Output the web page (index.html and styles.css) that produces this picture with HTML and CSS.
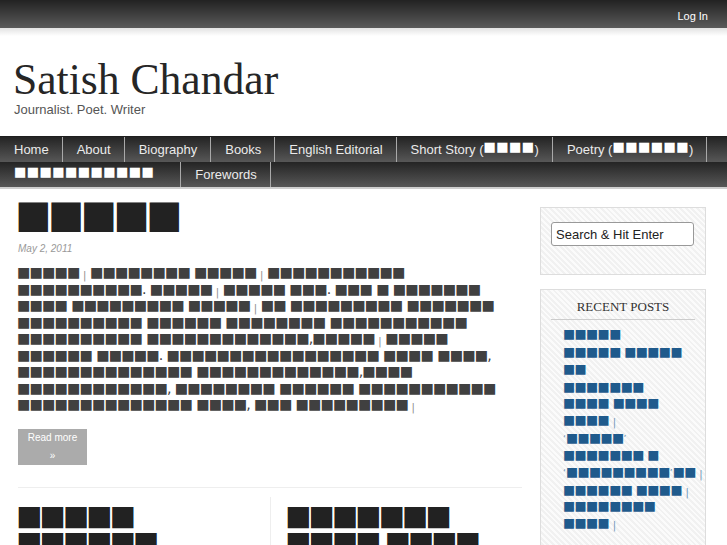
FILE: index.html
```html
<!DOCTYPE html>
<html lang="te">
<head>
<meta charset="utf-8">
<title>Satish Chandar</title>
<link rel="stylesheet" href="styles.css">
</head>
<body>
<div class="topbar"><a class="login" href="#">Log In</a></div>
<div class="shade"></div>
<header class="masthead">
  <h1 class="site-title">Satish Chandar</h1>
  <p class="tagline">Journalist. Poet. Writer</p>
</header>
<nav>
  <ul class="nav">
    <li>Home</li>
    <li>About</li>
    <li>Biography</li>
    <li>Books</li>
    <li>English Editorial</li>
    <li>Short Story (<span class="tf">■■■■</span>)</li>
    <li>Poetry (<span class="tf">■■■■■■</span>)</li>
    <li class="nav-wide"><span class="tf">■■■■■■■■■■■</span></li>
    <li>Forewords</li>
  </ul>
</nav>
<div class="wrap">
  <main class="main">
    <article class="post">
      <h2 class="post-title">■■■■■</h2>
      <p class="post-date">May 2, 2011</p>
      <p class="post-body">■■■■■<span class="d">|</span>■■■■■■■■ ■■■■■<span class="d">|</span>■■■■■■■■■■■<br>■■■■■■■■■■. ■■■■■<span class="d">|</span>■■■■■ ■■■. ■■■ ■ ■■■■■■■<br>■■■■ ■■■■■■■■■ ■■■■■<span class="d">|</span>■■ ■■■■■■■■■ ■■■■■■■<br>■■■■■■■■■■ ■■■■■■ ■■■■■■■■ ■■■■■■■■■■■<br>■■■■■■■■■■ ■■■■■■■■■■■■■,■■■■■<span class="d">|</span>■■■■■<br>■■■■■■ ■■■■■. ■■■■■■■■■■■■■■■■■ ■■■■ ■■■■,<br>■■■■■■■■■■■■■■ ■■■■■■■■■■■■■,■■■■<br>■■■■■■■■■■■■, ■■■■■■■■ ■■■■■■ ■■■■■■■■■■■<br>■■■■■■■■■■■■■■ ■■■■, ■■■ ■■■■■■■■■<span class="d">|</span></p>
      <a class="more" href="#">Read more »</a>
    </article>
    <hr class="sep">
    <div class="cols">
      <article class="col">
        <h3 class="col-title">■■■■■ ■■■■■■ ■■■■■■■</h3>
        <p class="col-date">April 28, 2011</p>
      </article>
      <article class="col">
        <h3 class="col-title">■■■■■■■ ■■■■ ■■■■ ■■■</h3>
        <p class="col-date">April 21, 2011</p>
      </article>
    </div>
  </main>
  <aside class="side">
    <div class="widget search">
      <input type="text" value="Search &amp; Hit Enter" aria-label="Search">
    </div>
    <div class="widget">
      <h4 class="widget-title">Recent Posts</h4>
      <ul class="recent">
        <li>■■■■■</li>
        <li>■■■■■ ■■■■■<br>■■</li>
        <li>■■■■■■■<br>■■■■ ■■■■<br>■■■■<span class="d">|</span></li>
        <li><span class="q">‘</span>■■■■■<span class="q">’</span><br>■■■■■■■ ■<br><span class="q">‘</span>■■■■■■■■■<span class="q">’</span>■■<span class="d">|</span></li>
        <li>■■■■■■ ■■■■<span class="d">|</span><br>■■■■■■■■<br>■■■■<span class="d">|</span></li>
      </ul>
    </div>
  </aside>
</div>
</body>
</html>
```
FILE: styles.css
```css
body {
  margin: 0;
  background: #fff;
  color: #333;
  font-family: "Liberation Sans", Arial, sans-serif;
}

.topbar {
  height: 28px;
  background: linear-gradient(#222, #5a5a5a);
  display: flex;
  justify-content: flex-end;
  padding-right: 19px;
}

.login {
  color: #fff;
  font-size: 11px;
  line-height: 23px;
  padding-top: 5px;
  text-decoration: none;
}

.shade {
  height: 8px;
  background: linear-gradient(#e2e2e2, #fff);
}

.masthead {
  padding: 21px 0 0 14px;
}

.site-title {
  margin: 0 0 0 -1px;
  font-family: "Liberation Serif", "Times New Roman", serif;
  font-weight: 400;
  font-size: 43.6px;
  line-height: 44px;
  color: #262626;
}

.tagline {
  margin: 1px 0 0;
  font-size: 13px;
  line-height: 16px;
  color: #555;
}

.nav {
  display: flex;
  flex-wrap: wrap;
  list-style: none;
  margin: 18px 0 0;
  padding: 0;
  border-top: 1px solid #1e1e1e;
  border-bottom: 2px solid #cfcfcf;
  background: linear-gradient(#242424, #575757) 0 0 / 100% 25px repeat-y;
}

.nav li {
  height: 25px;
  line-height: 26px;
  padding: 0 13px 0 14px;
  border-right: 1px solid #a9a9a9;
  color: #ebebeb;
  font-size: 13px;
  white-space: nowrap;
}

.nav .nav-wide {
  padding-right: 26px;
}

.tf {
  font-family: "DejaVu Sans", sans-serif;
}

.nav .tf {
  font-size: 13.2px;
  letter-spacing: 0.3px;
  color: #fff;
  line-height: 0;
  vertical-align: 3.5px;
}

.wrap {
  display: flex;
  align-items: flex-start;
  padding: 8px 21px 0 18px;
}

.main {
  width: 504px;
  flex: none;
}

.post-title {
  margin: 0 0 0 -3px;
  font-family: "DejaVu Sans", sans-serif;
  font-weight: 400;
  font-size: 38.4px;
  line-height: 34px;
  letter-spacing: -3.5px;
  color: #222;
}

.post-date,
.col-date {
  margin: 11px 0 0;
  font-style: italic;
  font-size: 10px;
  line-height: 13px;
  color: #999;
}

.post-body {
  margin: 9px 0 0 -1px;
  font-family: "DejaVu Sans", sans-serif;
  font-size: 14.2px;
  line-height: 16.5px;
  letter-spacing: -0.9px;
  word-spacing: 0.5px;
  color: #404040;
  white-space: nowrap;
}

.d {
  font-size: 10px;
  line-height: 0;
  letter-spacing: 0;
  word-spacing: 0;
  padding: 0 3.5px;
  color: #8a8a8a;
  vertical-align: -2px;
}

.more {
  display: block;
  width: 69px;
  box-sizing: border-box;
  margin-top: 16.5px;
  padding: 0 7px;
  background: #ababab;
  color: #fff;
  font-size: 10px;
  line-height: 18px;
  text-align: center;
  text-decoration: none;
}

.sep {
  border: 0;
  border-top: 1px solid #eee;
  margin: 22px 0 0;
}

.cols {
  display: grid;
  grid-template-columns: 252px 252px;
  margin-top: 9px;
}

.col {
  padding-top: 5.7px;
  padding-bottom: 40px;
}

.col + .col {
  border-left: 1px solid #eee;
  padding-left: 16px;
}

.col-title {
  margin: 0 0 0 -2px;
  font-family: "DejaVu Sans", sans-serif;
  font-weight: 400;
  font-size: 27.8px;
  line-height: 26px;
  letter-spacing: -2.9px;
  color: #222;
}

.side {
  width: 166px;
  flex: none;
  margin-left: 18px;
  margin-top: 10px;
}

.widget {
  border: 1px solid #ddd;
  background: repeating-linear-gradient(45deg, #f1f1f1 0, #f1f1f1 2px, #fbfbfb 2px, #fbfbfb 4px);
  margin-bottom: 14px;
}

.search {
  padding: 14px 10px 28px;
}

.search input {
  display: block;
  width: 143px;
  height: 24px;
  box-sizing: border-box;
  margin: 0;
  padding: 0 4px;
  border: 1px solid #999;
  border-radius: 3px;
  background: #fff;
  font-family: "Liberation Sans", Arial, sans-serif;
  font-size: 13px;
  color: #222;
}

.widget-title {
  margin: 0 10px;
  padding: 9px 0 4px;
  border-bottom: 1px solid #ccc;
  font-family: "Liberation Serif", "Times New Roman", serif;
  font-weight: 400;
  font-size: 13px;
  line-height: 16px;
  text-transform: uppercase;
  text-align: center;
  color: #333;
}

.recent {
  list-style: none;
  margin: 5.7px 0 0;
  padding: 0 10px 40px 22px;
  font-family: "DejaVu Sans", sans-serif;
  font-size: 12.8px;
  line-height: 16.6px;
  letter-spacing: -0.55px;
  color: #1f5a8c;
  white-space: nowrap;
}

.recent li {
  margin-bottom: 1.7px;
}

.recent .d {
  color: #6d95b8;
}

.q {
  font-size: 9px;
  line-height: 0;
  letter-spacing: 0;
  color: #6d95b8;
}
```
